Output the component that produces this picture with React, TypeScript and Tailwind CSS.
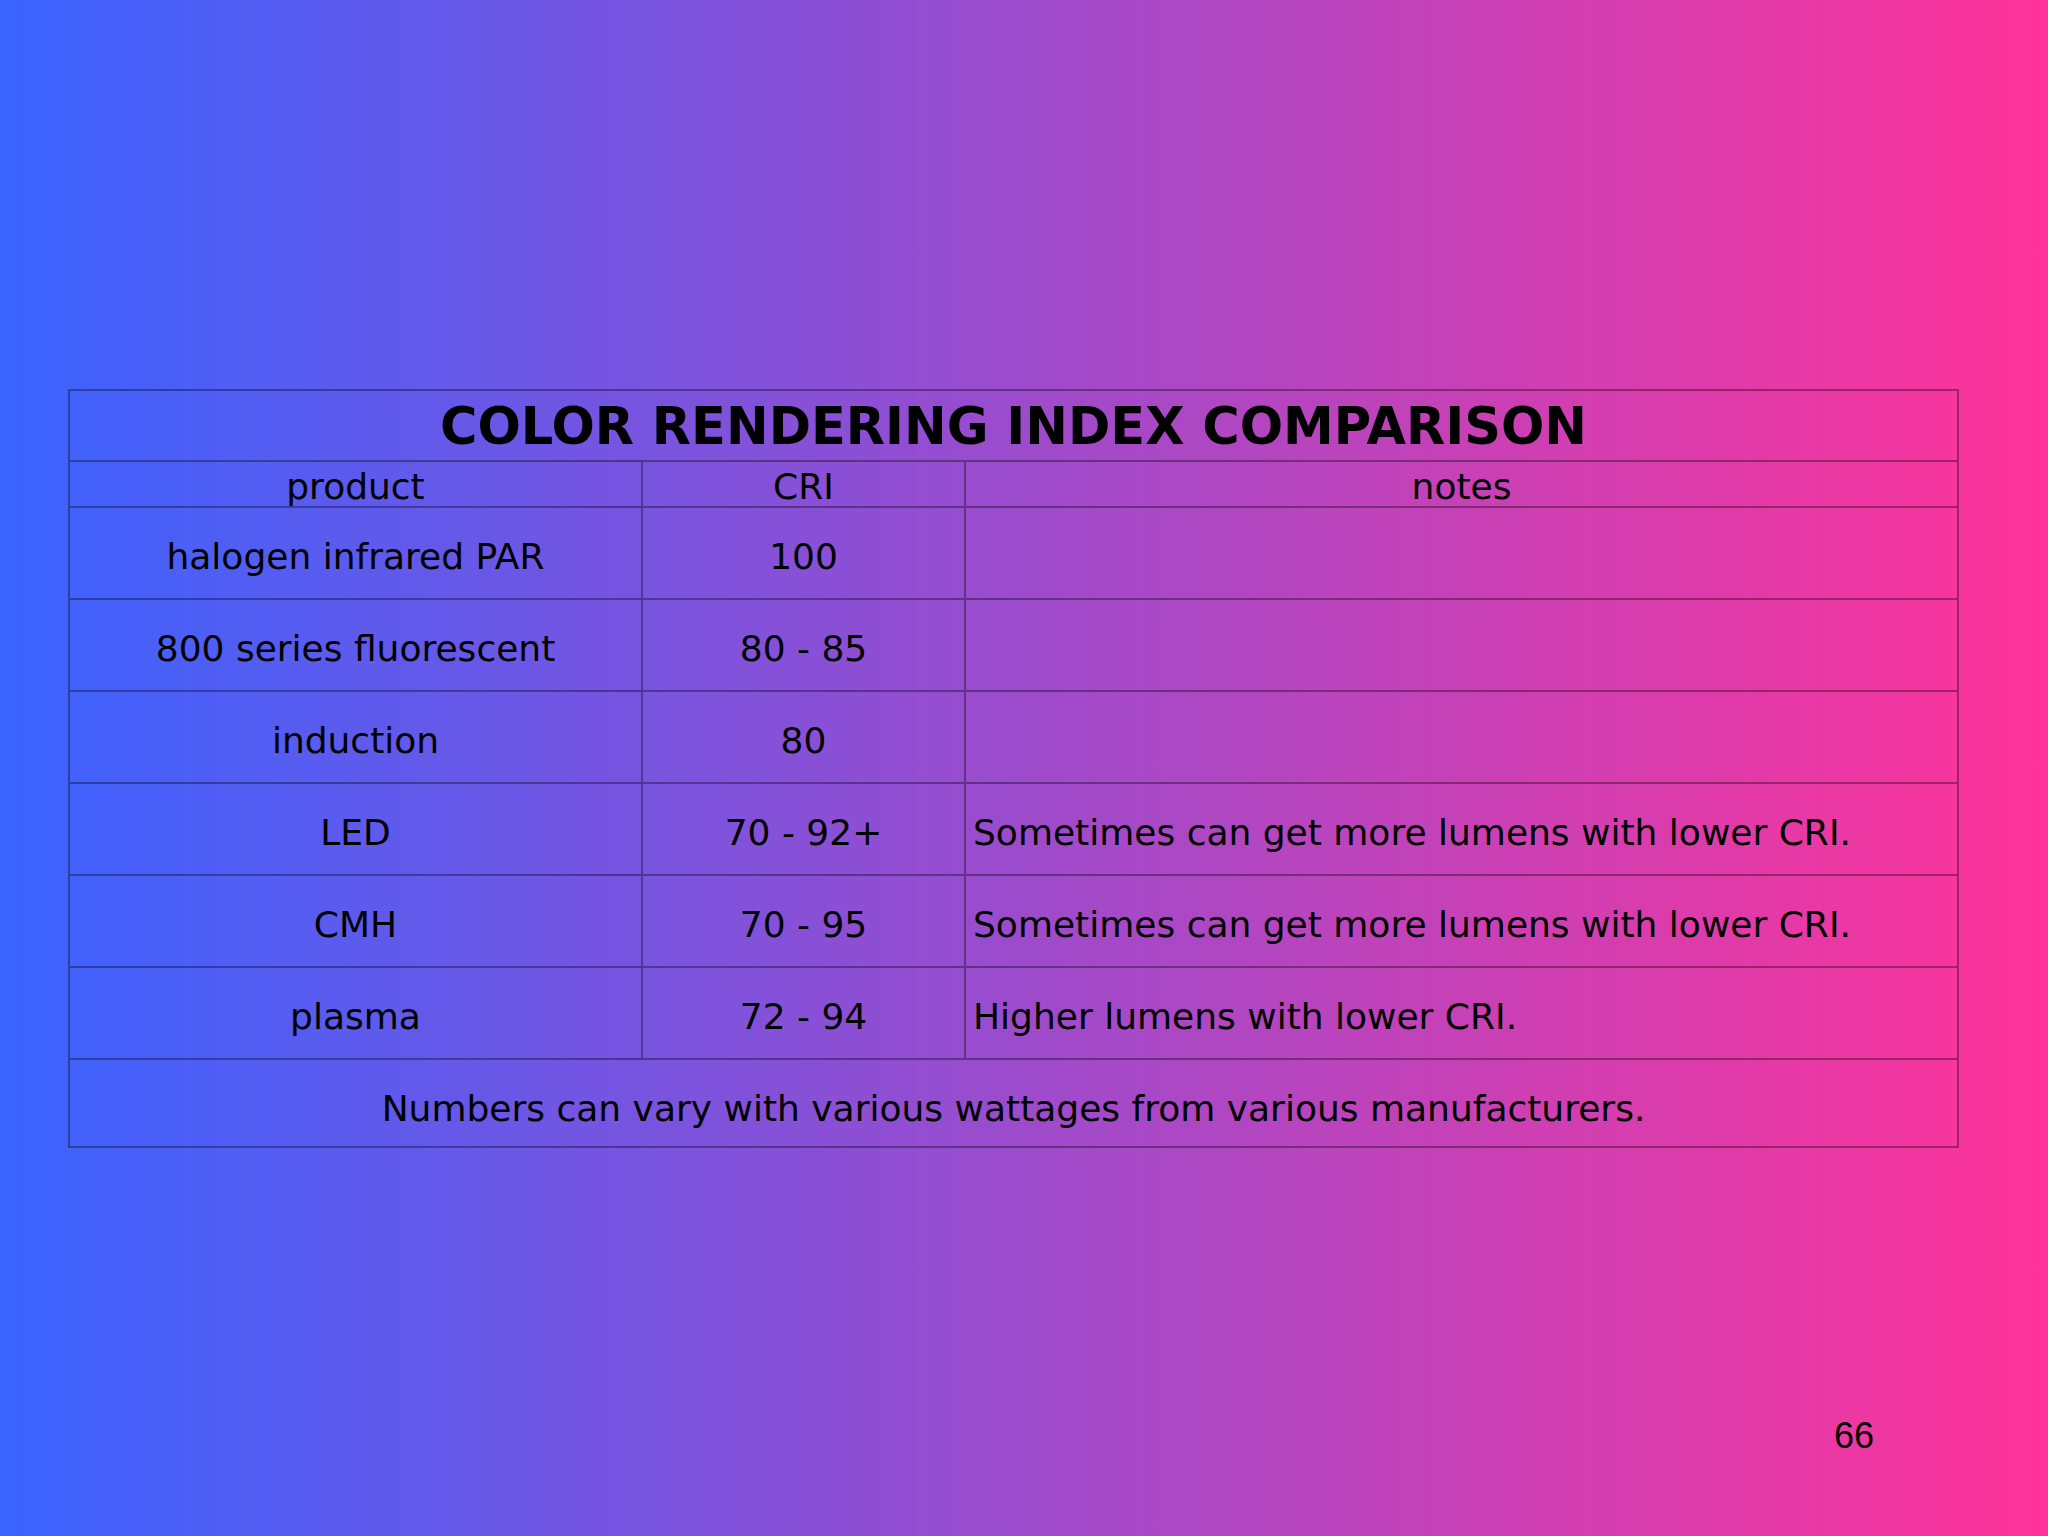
import React from "react";

const rows: { product: string; cri: string; notes: string }[] = [
  { product: "halogen infrared PAR", cri: "100", notes: "" },
  { product: "800 series fluorescent", cri: "80 - 85", notes: "" },
  { product: "induction", cri: "80", notes: "" },
  { product: "LED", cri: "70 - 92+", notes: "Sometimes can get more lumens with lower CRI." },
  { product: "CMH", cri: "70 - 95", notes: "Sometimes can get more lumens with lower CRI." },
  { product: "plasma", cri: "72 - 94", notes: "Higher lumens with lower CRI." },
];

export default function App() {
  return (
    <div className="w-[2048px] h-[1536px] bg-[linear-gradient(to_right,#3a63ff,#ff3399)] flex flex-col font-['DejaVu_Sans',sans-serif] text-black overflow-hidden">
      <div className="mt-[389px] ml-[68px] w-[1891px] border-2 border-black/35 flex flex-col">
        {/* title */}
        <div className="h-[71px] border-b-2 border-black/35 flex justify-center pt-[6px]">
          <span className="text-[51px] leading-[59px] font-bold whitespace-nowrap">COLOR RENDERING INDEX COMPARISON</span>
        </div>
        {/* header */}
        <div className="h-[46px] border-b-2 border-black/35 flex text-[36px] leading-[36px]">
          <div className="w-[573px] border-r-2 border-black/35 flex justify-center pt-[7px]">product</div>
          <div className="w-[323px] border-r-2 border-black/35 flex justify-center pt-[7px]">CRI</div>
          <div className="flex-1 flex justify-center pt-[7px]">notes</div>
        </div>
        {rows.map((r, i) => (
          <div key={i} className="h-[92px] border-b-2 border-black/35 flex text-[36px] leading-[42px]">
            <div className="w-[573px] border-r-2 border-black/35 flex justify-center pt-[28px]">{r.product}</div>
            <div className="w-[323px] border-r-2 border-black/35 flex justify-center pt-[28px]">{r.cri}</div>
            <div className="flex-1 pl-[7px] pt-[28px] whitespace-nowrap">{r.notes}</div>
          </div>
        ))}
        <div className="h-[86px] flex justify-center pt-[28px] text-[36px] leading-[42px]">
          Numbers can vary with various wattages from various manufacturers.
        </div>
      </div>
      <div className="mt-[267px] flex justify-end pr-[174px]">
        <span className="font-['Liberation_Sans',sans-serif] text-[36px] leading-[42px]">66</span>
      </div>
    </div>
  );
}
